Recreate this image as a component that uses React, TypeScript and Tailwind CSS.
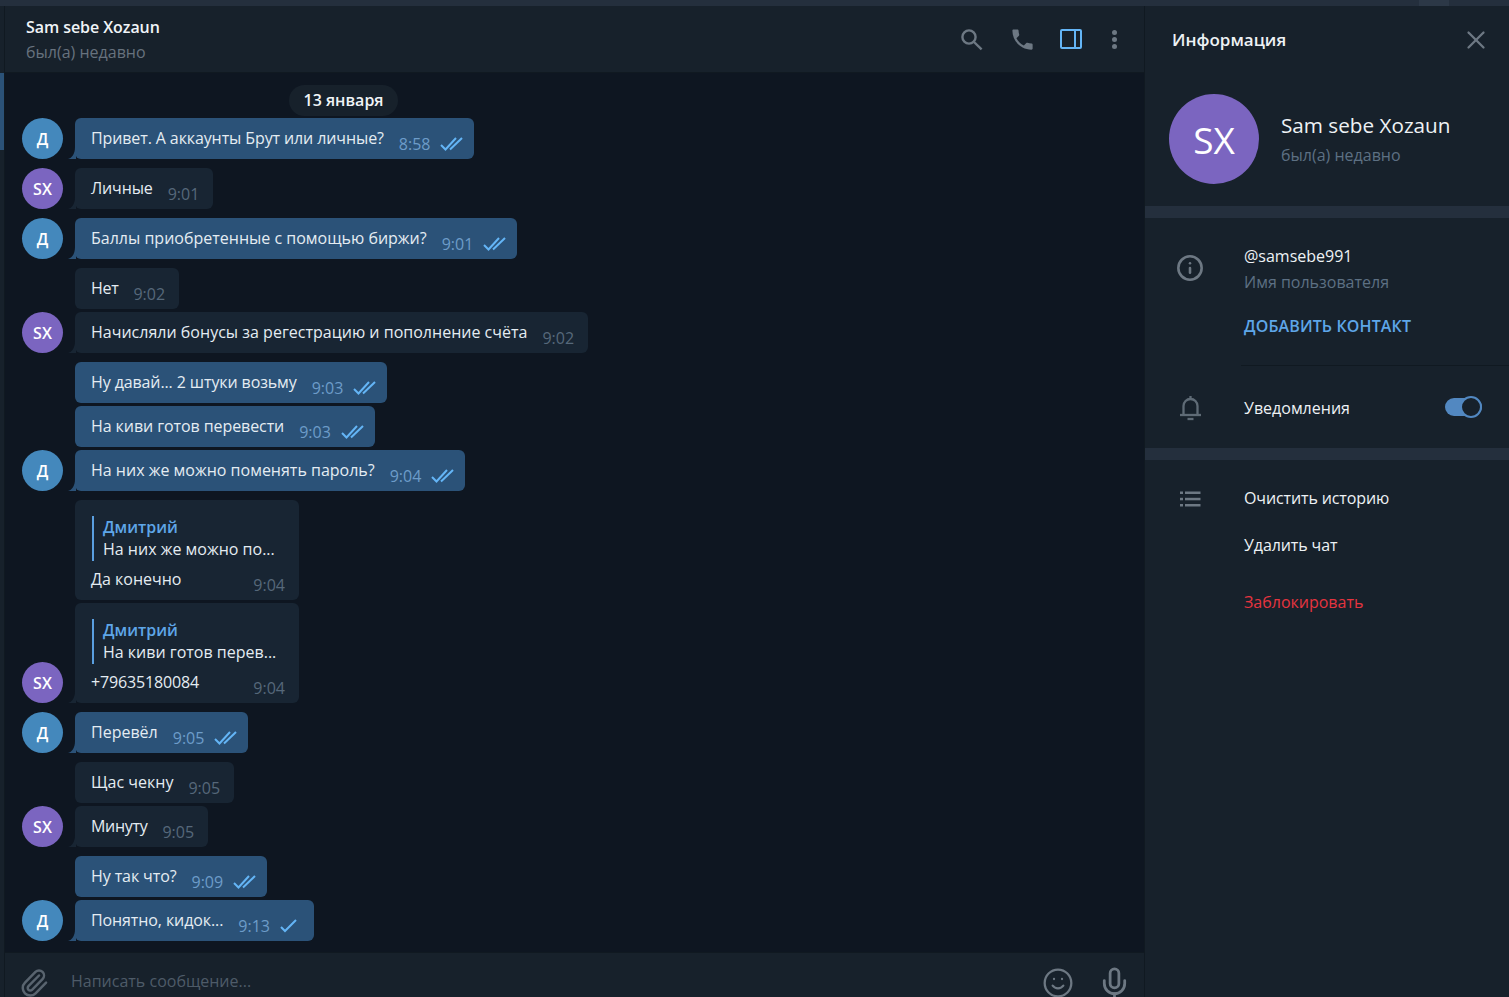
import React from "react";
import { Smile, Mic, Paperclip, Info, X } from "lucide-react";

type Msg = {
  who: "me" | "them";
  text: string;
  time: string;
  check?: 1 | 2;
  avatar?: boolean;
  gap?: number;
  reply?: string;
  ls?: number;
};

const messages: Msg[] = [
  { who: "me", text: "Привет. А аккаунты Брут или личные?", time: "8:58", check: 2, avatar: true, ls: -0.11 },
  { who: "them", text: "Личные", time: "9:01", avatar: true, gap: 9, ls: -0.15 },
  { who: "me", text: "Баллы приобретенные с помощью биржи?", time: "9:01", check: 2, avatar: true, gap: 9 },
  { who: "them", text: "Нет", time: "9:02", gap: 9, ls: -0.3 },
  { who: "them", text: "Начисляли бонусы за регестрацию и пополнение счёта", time: "9:02", avatar: true, gap: 3, ls: 0.01 },
  { who: "me", text: "Ну давай... 2 штуки возьму", time: "9:03", check: 2, gap: 9, ls: -0.11 },
  { who: "me", text: "На киви готов перевести", time: "9:03", check: 2, gap: 3, ls: -0.08 },
  { who: "me", text: "На них же можно поменять пароль?", time: "9:04", check: 2, avatar: true, gap: 3 },
  { who: "them", text: "Да конечно", time: "9:04", reply: "На них же можно по...", gap: 9 },
  { who: "them", text: "+79635180084", time: "9:04", reply: "На киви готов перев...", avatar: true, gap: 3, ls: -0.15 },
  { who: "me", text: "Перевёл", time: "9:05", check: 2, avatar: true, gap: 9 },
  { who: "them", text: "Щас чекну", time: "9:05", gap: 9 },
  { who: "them", text: "Минуту", time: "9:05", avatar: true, gap: 3, ls: -0.3 },
  { who: "me", text: "Ну так что?", time: "9:09", check: 2, gap: 9, ls: -0.1 },
  { who: "me", text: "Понятно, кидок...", time: "9:13", check: 1, avatar: true, gap: 3, ls: -0.1 },
];

function Checks({ count }: { count: 1 | 2 }) {
  return (
    <svg width="24" height="14" viewBox="0 0 24 14" fill="none" stroke="#64b5f6" strokeWidth="2" className="ml-[10px] mt-[19px] shrink-0">
      {count === 2 ? (
        <>
          <path d="M1 8 L5.5 12.5 L16 1" />
          <path d="M10 12.5 L22 1" />
        </>
      ) : (
        <path d="M1 8 L5 12 L16 1" />
      )}
    </svg>
  );
}

function Tail({ color }: { color: string }) {
  return (
    <svg width="8" height="12" viewBox="0 0 8 12" className="absolute bottom-0 left-[-7px]" fill={color}>
      <path d="M8 0 L8 12 L0 12 C4 11 7 7 7 0 Z" />
    </svg>
  );
}

function Avatar({ who }: { who: "me" | "them" }) {
  return who === "me" ? (
    <div className="w-[41px] h-[41px] rounded-full bg-[#4488bc] flex items-center justify-center text-white text-[16px] font-semibold shrink-0">Д</div>
  ) : (
    <div className="w-[41px] h-[41px] rounded-full bg-[#7b65c0] flex items-center justify-center text-white text-[16px] font-semibold shrink-0">SX</div>
  );
}

function Bubble({ m }: { m: Msg }) {
  const me = m.who === "me";
  const bg = me ? "#2b5278" : "#182533";
  return (
    <div className="flex items-end" style={{ marginTop: m.gap ?? 0 }}>
      <div className="w-[41px] shrink-0">{m.avatar && <Avatar who={m.who} />}</div>
      <div className={`relative ml-[12px] rounded-[6px] ${me ? "bg-[#2b5278]" : "bg-[#182533]"}`}>
        {m.avatar && <Tail color={bg} />}
        {m.reply ? (
          <div className="w-[224px] h-[100px] pl-[17px] pr-[14px] pt-[16px] flex flex-col">
            <div className="border-l-2 border-[#5a9fe0] pl-[9px] h-[45px] flex flex-col">
              <div className="text-[#5ea6e8] font-semibold text-[16px] leading-[22px]">Дмитрий</div>
              <div className="text-[#e4ecf2] text-[16px] leading-[22px] whitespace-nowrap">{m.reply}</div>
            </div>
            <div className="flex justify-between mt-[6px] ml-[-1px]">
              <span className="text-[#e4ecf2] text-[16px] leading-[24px]" style={{ letterSpacing: m.ls ?? 0 }}>{m.text}</span>
              <span className="text-[#56687a] text-[16px] leading-[24px] mt-[6px]">{m.time}</span>
            </div>
          </div>
        ) : (
          <div className="h-[41px] pl-[16px] flex items-start" style={{ paddingRight: me ? 10 : 14 }}>
            <span className="text-[#e4ecf2] text-[16px] leading-[24px] mt-[8px] whitespace-nowrap" style={{ letterSpacing: m.ls ?? 0 }}>{m.text}</span>
            <span className={`${me ? "text-[#6d9cc9]" : "text-[#56687a]"} text-[16px] leading-[24px] mt-[14px] ml-[15px]`}>{m.time}</span>
            {m.check && <Checks count={m.check} />}
          </div>
        )}
      </div>
    </div>
  );
}

export default function App() {
  return (
    <div className="w-[1509px] h-[997px] overflow-hidden flex flex-col bg-[#17212b] font-['Open_Sans',sans-serif]">
      <div className="h-[6px] bg-[#242f3d] flex shrink-0">
        <div className="ml-[1419px] w-[30px] bg-[#2c3847]" />
      </div>
      <div className="flex flex-1 min-h-0">
        <div className="w-[5px] shrink-0 flex flex-col border-r border-[#101921]">
          <div className="h-[67px]" />
          <div className="h-[77px] bg-[#2b5278]" />
        </div>
        <div className="w-[1140px] shrink-0 flex flex-col border-r border-[#101921]">
          <div className="h-[67px] shrink-0 border-b border-[#101921] flex items-center pl-[21px] pr-[27px]">
            <div className="flex-1">
              <div className="text-[16px] font-semibold text-[#f0f4f7] leading-[22px] mb-[3px] tracking-[-0.07px]">Sam sebe Xozaun</div>
              <div className="text-[16px] text-[#67727e] leading-[22px]">был(а) недавно</div>
            </div>
            <div className="flex items-center">
              <svg width="24" height="24" viewBox="0 0 24 24" fill="none" stroke="#6d7883" strokeWidth="2.4" className="mt-[1px]">
                <circle cx="9" cy="9" r="6.6" />
                <path d="M14 14 L21.6 21.4" />
              </svg>
              <svg width="27" height="27" viewBox="0 0 24 24" fill="#6d7883" className="ml-[25px] shrink-0">
                <path d="M6.62 10.79c1.44 2.83 3.76 5.14 6.59 6.59l2.2-2.2c.27-.27.67-.36 1.02-.24 1.12.37 2.33.57 3.57.57.55 0 1 .45 1 1V20c0 .55-.45 1-1 1-9.39 0-17-7.61-17-17 0-.55.45-1 1-1h3.5c.55 0 1 .45 1 1 0 1.25.2 2.45.57 3.57.11.35.03.74-.25 1.02l-2.2 2.2z" />
              </svg>
              <div className="ml-[24px] w-[22px] h-[20px] rounded-[2px] border-[2.5px] border-[#64b5f6] flex justify-end">
                <div className="w-[2.5px] bg-[#64b5f6] mr-[4px]" />
              </div>
              <div className="ml-[30px] flex flex-col gap-[2px] items-center">
                <div className="w-[5px] h-[5px] rounded-full bg-[#6d7883]" />
                <div className="w-[5px] h-[5px] rounded-full bg-[#6d7883]" />
                <div className="w-[5px] h-[5px] rounded-full bg-[#6d7883]" />
              </div>
            </div>
          </div>
          <div className="flex-1 min-h-0 bg-[#0e1621] pl-[17px] pt-[12px] overflow-hidden">
            <div className="ml-[267px] w-[109px] h-[31px] rounded-full bg-[#17212b] flex items-center justify-center pb-[2px] text-[#f0f4f7] text-[16px] font-semibold mb-[2px]">
              13 января
            </div>
            {messages.map((m, i) => (
              <Bubble key={i} m={m} />
            ))}
          </div>
          <div className="h-[45px] shrink-0 border-t border-[#101921] bg-[#17212b] flex items-center pl-[14px] pr-[12px]">
            <Paperclip size={30} strokeWidth={2} className="text-[#59646f] mt-[16px] shrink-0" />
            <div className="ml-[22px] flex-1 text-[16px] text-[#4e5b68] mt-[11px]">Написать сообщение...</div>
            <Smile size={32} strokeWidth={1.7} className="text-[#6d7883] mt-[16px] shrink-0" />
            <Mic size={35} strokeWidth={1.9} className="text-[#6d7883] ml-[23px] mt-[17px] shrink-0" />
          </div>
        </div>
        <div className="flex-1 min-w-0 flex flex-col">
          <div className="h-[67px] shrink-0 flex items-center pl-[27px] pr-[18px] justify-between">
            <div className="text-[17px] font-semibold text-[#eef2f5]">Информация</div>
            <X size={30} strokeWidth={1.8} className="text-[#6d7883]" />
          </div>
          <div className="h-[133px] shrink-0 flex pl-[24px] pt-[21px]">
            <div className="w-[90px] h-[90px] rounded-full bg-[#7b65c0] flex items-center justify-center pt-[1px] text-white text-[37px] font-medium">SX</div>
            <div className="ml-[22px] pt-[16px]">
              <div className="text-[20.7px] font-medium text-[#eef2f5] leading-[30px]">Sam sebe Xozaun</div>
              <div className="text-[16px] text-[#5d7083] leading-[24px] mt-[3px]">был(а) недавно</div>
            </div>
          </div>
          <div className="h-[12px] shrink-0 bg-[#242f3d]" />
          <div className="shrink-0 h-[230px] flex flex-col">
            <div className="flex h-[147px]">
              <div className="w-[99px] pl-[31px] pt-[36px] shrink-0">
                <Info size={28} strokeWidth={2.2} className="text-[#6d7883]" />
              </div>
              <div className="flex-1 pt-[26px] flex flex-col">
                <div className="text-[16px] text-[#eef2f5] leading-[24px]">@samsebe991</div>
                <div className="text-[16px] text-[#5d7083] leading-[24px] mt-[2px]">Имя пользователя</div>
                <div className="text-[16px] font-semibold text-[#5ea6e8] leading-[24px] mt-[20px] tracking-[0.12px]">ДОБАВИТЬ КОНТАКТ</div>
              </div>
            </div>
            <div className="ml-[96px] h-px bg-[#101921]" />
            <div className="flex flex-1 items-center">
              <div className="w-[99px] pl-[34px] shrink-0">
                <svg width="23" height="26" viewBox="0 0 23 26" fill="none" stroke="#5f6b76" strokeWidth="2.3" className="mt-[2px] block">
                  <path d="M4.5 19 V11 a7 7 0 0 1 14 0 V19" />
                  <path d="M1 20 H22" />
                  <path d="M11.5 1 V4" />
                  <path d="M8.5 24 H14.5" />
                </svg>
              </div>
              <div className="flex-1 text-[16px] text-[#eef2f5] mt-[1px]">Уведомления</div>
              <div className="relative w-[37px] h-[18px] mr-[27px] rounded-full bg-[#5288c1]">
                <div className="absolute right-0 top-[-2px] w-[22px] h-[22px] rounded-full bg-[#17212b] border-2 border-[#5288c1]" />
              </div>
            </div>
          </div>
          <div className="h-[12px] shrink-0 bg-[#242f3d]" />
          <div className="flex flex-1">
            <div className="w-[99px] pl-[35px] pt-[31px] shrink-0">
              <svg width="21" height="16" viewBox="0 0 21 16" fill="#6d7883" className="block">
                <rect x="0" y="0.5" width="3" height="2.5" />
                <rect x="5" y="0.5" width="15.5" height="2.5" />
                <rect x="0" y="6.8" width="3" height="2.5" />
                <rect x="5" y="6.8" width="15.5" height="2.5" />
                <rect x="0" y="13" width="3" height="2.5" />
                <rect x="5" y="13" width="15.5" height="2.5" />
              </svg>
            </div>
            <div className="flex flex-col text-[16px] leading-[24px] pt-[26px]">
              <div className="text-[#eef2f5] tracking-[-0.12px]">Очистить историю</div>
              <div className="text-[#eef2f5] mt-[23px] tracking-[-0.1px]">Удалить чат</div>
              <div className="text-[#e5343f] mt-[33px]">Заблокировать</div>
            </div>
          </div>
        </div>
      </div>
    </div>
  );
}
